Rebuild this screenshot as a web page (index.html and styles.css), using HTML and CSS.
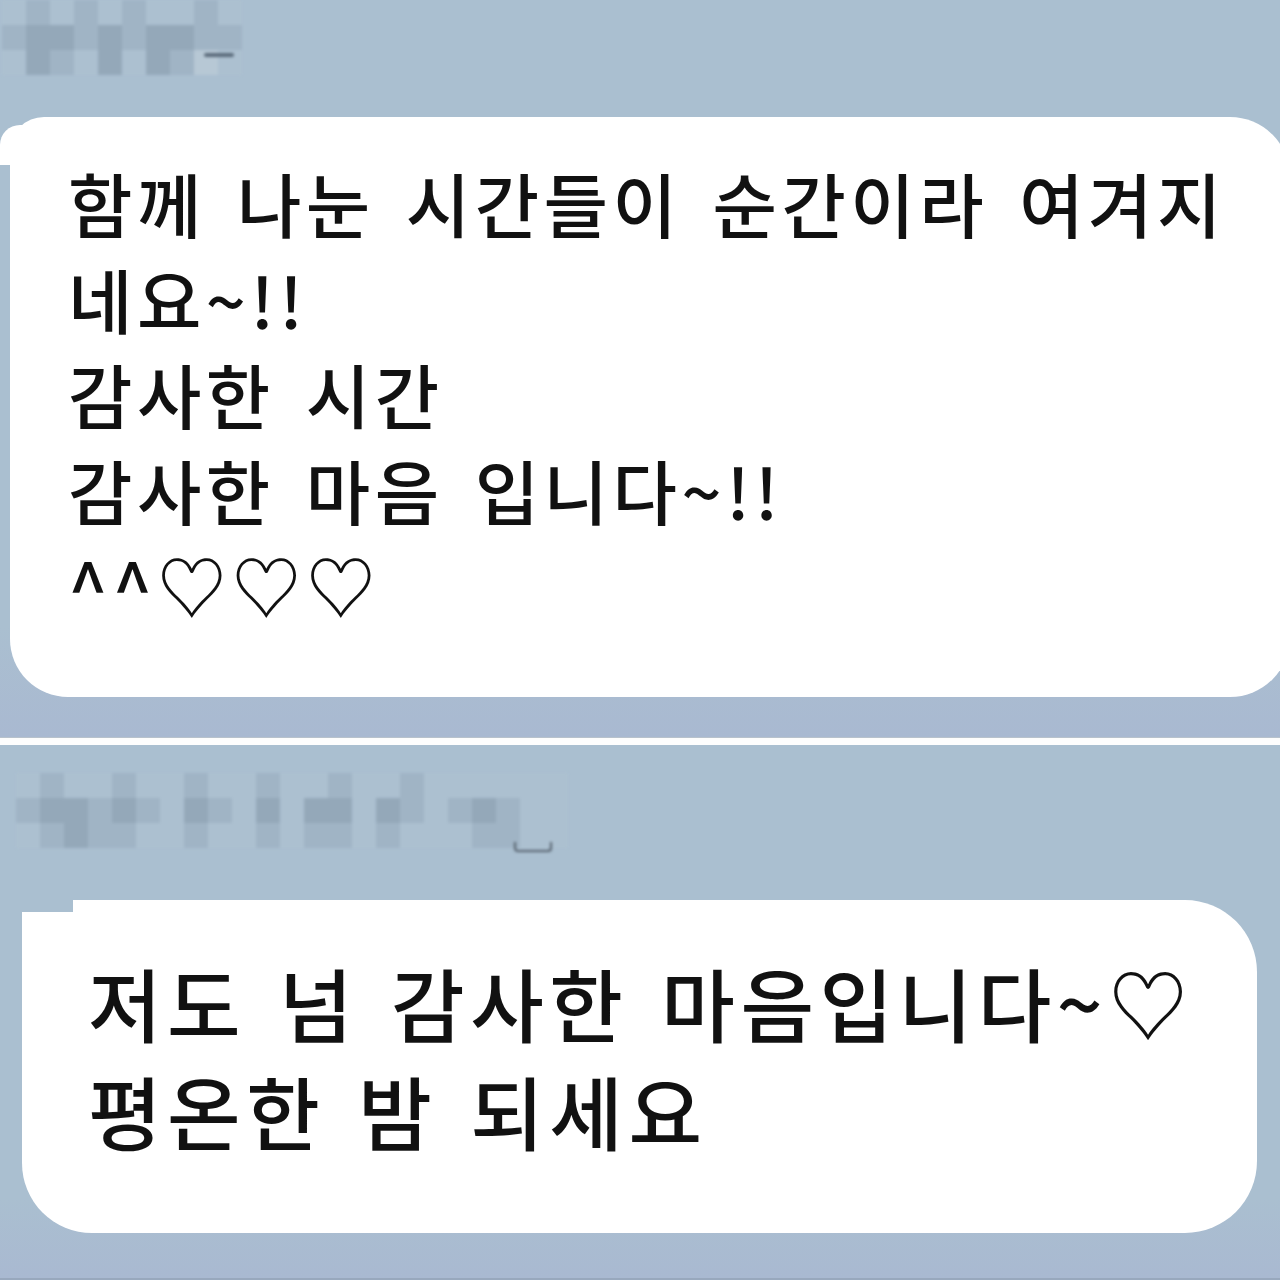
FILE: index.html
```html
<!DOCTYPE html>
<html lang="ko">
<head>
    <meta charset="UTF-8">
    <meta name="viewport" content="width=device-width, initial-scale=1.0">
    <title>카톡 캡처</title>
    <link rel="stylesheet" href="styles.css">
</head>
<body>
    <div class="panel panel-top">
        <div class="sender sender-top">
            <span class="tile l"></span><span class="tile m"></span><span class="tile l"></span><span class="tile m"></span><span class="tile l"></span><span class="tile m"></span><span class="tile l"></span><span class="tile l"></span><span class="tile m"></span><span class="tile l"></span>
            <span class="tile m"></span><span class="tile d"></span><span class="tile d"></span><span class="tile m"></span><span class="tile d"></span><span class="tile m"></span><span class="tile d"></span><span class="tile d"></span><span class="tile m"></span><span class="tile m"></span>
            <span class="tile l"></span><span class="tile d"></span><span class="tile m"></span><span class="tile l"></span><span class="tile d"></span><span class="tile l"></span><span class="tile d"></span><span class="tile m"></span><span class="tile x"></span><span class="tile l"></span>
            <span class="mark"></span>
        </div>

        <div class="bubble bubble-top">
            <p>함께 나눈 시간들이 순간이라 여겨지<br>네요~!!<br>감사한 시간<br>감사한 마음 입니다~!!<br>^^♡♡♡</p>
        </div>
    </div>

    <div class="divider"></div>

    <div class="panel panel-bottom">
        <div class="sender sender-bottom">
            <span class="tile l"></span><span class="tile m"></span><span class="tile l"></span><span class="tile l"></span><span class="tile m"></span><span class="tile l"></span><span class="tile l"></span><span class="tile m"></span><span class="tile l"></span><span class="tile l"></span><span class="tile m"></span><span class="tile l"></span><span class="tile l"></span><span class="tile m"></span><span class="tile l"></span><span class="tile l"></span><span class="tile m"></span><span class="tile l"></span><span class="tile l"></span><span class="tile l"></span><span class="tile l"></span><span class="tile l"></span><span class="tile l"></span>
            <span class="tile m"></span><span class="tile d"></span><span class="tile d"></span><span class="tile m"></span><span class="tile d"></span><span class="tile m"></span><span class="tile l"></span><span class="tile d"></span><span class="tile m"></span><span class="tile l"></span><span class="tile d"></span><span class="tile l"></span><span class="tile d"></span><span class="tile d"></span><span class="tile l"></span><span class="tile d"></span><span class="tile m"></span><span class="tile l"></span><span class="tile m"></span><span class="tile d"></span><span class="tile m"></span><span class="tile l"></span><span class="tile l"></span>
            <span class="tile l"></span><span class="tile m"></span><span class="tile d"></span><span class="tile m"></span><span class="tile m"></span><span class="tile l"></span><span class="tile l"></span><span class="tile m"></span><span class="tile l"></span><span class="tile l"></span><span class="tile m"></span><span class="tile l"></span><span class="tile m"></span><span class="tile m"></span><span class="tile l"></span><span class="tile m"></span><span class="tile l"></span><span class="tile l"></span><span class="tile l"></span><span class="tile m"></span><span class="tile m"></span><span class="tile l"></span><span class="tile l"></span>
            <span class="mark"></span>
        </div>

        <div class="bubble bubble-bottom">
            <p>저도 넘 감사한 마음입니다~♡<br>평온한 밤 되세요</p>
        </div>
    </div>
</body>
</html>
```

FILE: styles.css
```css
body {
    margin: 0;
    background-color: #ffffff;
    font-family: "Noto Sans CJK KR", "Noto Sans", sans-serif;
    color: #111;
}

.panel {
    position: relative;
    overflow: hidden;
    background: linear-gradient(#aabfd0 85%, #a9b9d1);
}

.panel-top {
    height: 737px;
}

.panel-bottom {
    height: 533px;
    border-bottom: 2px solid #98a8bd;
}

.divider {
    height: 8px;
    background-color: #fdfdfd;
    border-top: 1px solid #b8c2cc;
    box-sizing: border-box;
}

/* blurred sender name */
.sender {
    position: relative;
    display: grid;
    grid-auto-rows: 25px;
    filter: blur(1.5px);
}

.sender-top {
    grid-template-columns: repeat(10, 24px);
    width: 240px;
    height: 77px;
    padding-left: 2px;
}

.sender-bottom {
    grid-template-columns: repeat(23, 24px);
    width: 552px;
    height: 77px;
    margin: 28px 0 0 16px;
}

.tile.l { background-color: #acc0d0; }
.tile.m { background-color: #a0b4c5; }
.tile.d { background-color: #94a8b9; }
.tile.x { background-color: #b7c8d5; }

.mark {
    position: absolute;
    right: 8px;
    bottom: 20px;
    width: 30px;
    height: 4px;
    border-radius: 2px;
    background-color: #5a6a7a;
}

.sender-bottom .mark {
    right: 16px;
    bottom: -2px;
    width: 34px;
    height: 8px;
    border: 2px solid #55606c;
    border-top: none;
    background: none;
    border-radius: 0 0 4px 4px;
}

/* bubbles */
.bubble {
    position: relative;
    background-color: #ffffff;
    box-sizing: border-box;
}

.bubble p {
    margin: 0;
    font-weight: 500;
}

.bubble-top {
    margin: 40px 0 0 10px;
    width: 1280px;
    height: 580px;
    padding: 38px 0 0 58px;
    border-radius: 34px 60px 60px 58px;
    font-size: 70px;
    line-height: 95.5px;
    letter-spacing: 4.5px;
    word-spacing: 7px;
}

.bubble-top::before {
    content: "";
    position: absolute;
    left: -10px;
    top: 8px;
    width: 34px;
    height: 40px;
    background-color: #ffffff;
    border-radius: 20px 0 0 0;
}

.bubble-bottom {
    margin: 50px 0 0 22px;
    width: 1235px;
    height: 333px;
    padding: 47px 0 0 66px;
    border-radius: 0 72px 72px 70px;
    font-size: 80px;
    line-height: 108px;
    letter-spacing: 5.5px;
    word-spacing: 5px;
}

.bubble-bottom::before {
    content: "";
    position: absolute;
    left: 0;
    top: 0;
    width: 51px;
    height: 12px;
    background-color: #aabfd0;
}
```
